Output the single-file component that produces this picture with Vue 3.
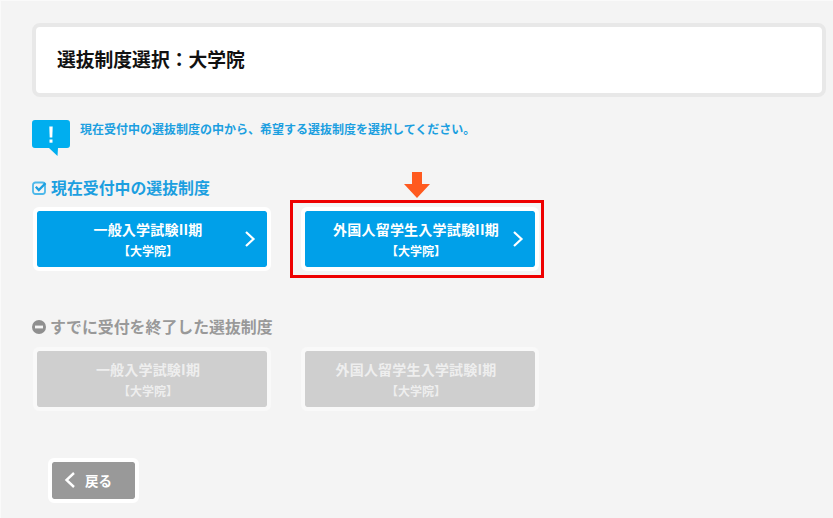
<script setup>
const active = [
  { title: '一般入学試験II期', sub: '【大学院】' },
  { title: '外国人留学生入学試験II期', sub: '【大学院】', marked: true },
]
const closed = [
  { title: '一般入学試験I期', sub: '【大学院】' },
  { title: '外国人留学生入学試験I期', sub: '【大学院】' },
]
</script>

<template>
  <main class="page">
    <header class="title-card"><h1>選抜制度選択：大学院</h1></header>

    <div class="notice">
      <svg class="notice-icon" viewBox="0 0 38 36" width="38" height="36" aria-hidden="true">
        <path d="M3 0H35a3 3 0 0 1 3 3V25a3 3 0 0 1-3 3H26L25.500 36L17 28H3a3 3 0 0 1-3-3V3a3 3 0 0 1 3-3Z" fill="#00aeef" />
        <path d="M17.300 6.500H20.700L20.300 17.500H17.700Z" fill="#fff" />
        <rect x="17.500" y="19.500" width="3" height="3.200" fill="#fff" />
      </svg>
      <p>現在受付中の選抜制度の中から、希望する選抜制度を選択してください。</p>
    </div>

    <h2 class="section-title active-title">
      <svg viewBox="0 0 15 14" width="15" height="14" aria-hidden="true">
        <rect x="1" y="1.500" width="12" height="11.500" rx="2.500" fill="none" stroke="#4db8ea" stroke-width="1.800" />
        <path d="M3.800 5.800L6.800 9L13.500 2.200" fill="none" stroke="#1c9fe0" stroke-width="2.300" />
      </svg>
      現在受付中の選抜制度
    </h2>
    <div class="choices">
      <div v-for="item in active" :key="item.title" class="choice-wrap">
        <template v-if="item.marked">
          <svg class="down-arrow" viewBox="0 0 26 26" width="26" height="26" aria-hidden="true">
            <path d="M8 0H18V12H26L13 26L0 12H8Z" fill="#ff5a1f" />
          </svg>
          <span class="highlight"></span>
        </template>
        <a class="choice">
          <strong>{{ item.title }}</strong>
          <small>{{ item.sub }}</small>
          <svg class="chevron" viewBox="0 0 12 18" width="12" height="18" aria-hidden="true">
            <path d="M2 2L9.500 9L2 16" fill="none" stroke="#fff" stroke-width="2.200" />
          </svg>
        </a>
      </div>
    </div>

    <h2 class="section-title closed-title">
      <svg viewBox="0 0 14 14" width="14" height="14" aria-hidden="true">
        <circle cx="7" cy="7" r="7" fill="#8f8f8f" />
        <rect x="3" y="5.600" width="8" height="2.800" fill="#f4f4f4" />
      </svg>
      すでに受付を終了した選抜制度
    </h2>
    <div class="choices closed-choices">
      <div v-for="item in closed" :key="item.title" class="choice-wrap">
        <a class="choice disabled">
          <strong>{{ item.title }}</strong>
          <small>{{ item.sub }}</small>
        </a>
      </div>
    </div>

    <a class="back">
      <svg viewBox="0 0 12 18" width="12" height="18" aria-hidden="true">
        <path d="M10 2L2.500 9L10 16" fill="none" stroke="#fff" stroke-width="2.400" />
      </svg>
      <span>戻る</span>
    </a>
  </main>
</template>

<style scoped>
.page {
  width: 833px;
  height: 518px;
  box-sizing: border-box;
  padding: 22px 7px 0 31px;
  background: #f4f4f4;
  border-top: 1px solid #fafafa;
  border-left: 1px solid #fafafa;
  overflow: hidden;
  font-family: "Noto Sans CJK JP", sans-serif;
}
.title-card {
  height: 74px;
  box-sizing: border-box;
  display: flex;
  align-items: center;
  padding-left: 21px;
  background: #fff;
  border: 4px solid #e8e8e8;
  border-radius: 8px;
}
h1 {
  margin: -2px 0 0;
  font-size: 18.800px;
  line-height: 1;
  font-weight: 700;
  color: #111;
}
.notice {
  display: flex;
  gap: 10px;
  margin-top: 23px;
}
.notice-icon {
  flex: none;
}
.notice p {
  margin: 0;
  font-size: 12px;
  line-height: 18px;
  font-weight: 700;
  color: #1c9fe0;
}
.section-title {
  display: flex;
  align-items: center;
  gap: 4px;
  margin: 0;
  font-size: 15.900px;
  line-height: 20px;
  font-weight: 700;
}
.active-title {
  margin-top: 22px;
  color: #1c9fe0;
}
.closed-title {
  margin-top: 46px;
  color: #999;
}
.choices {
  display: flex;
  gap: 30px;
  margin: 9px 0 0 1px;
}
.closed-choices {
  margin-top: 10px;
}
.choice-wrap {
  position: relative;
  width: 238px;
}
.down-arrow {
  position: absolute;
  left: 103px;
  top: -35px;
}
.highlight {
  position: absolute;
  left: -11px;
  top: -7px;
  width: 254px;
  height: 78px;
  box-sizing: border-box;
  border: 3px solid #ee0000;
}
.choice {
  position: relative;
  display: flex;
  flex-direction: column;
  align-items: center;
  justify-content: center;
  height: 64px;
  box-sizing: border-box;
  padding: 0 8px 1px 0;
  background: #00a0e9;
  border: 4px solid #fff;
  border-radius: 6px;
  background-clip: padding-box;
  color: #fff;
}
.choice strong {
  font-size: 14px;
  line-height: 20px;
  font-weight: 700;
  letter-spacing: 0.2px;
}
.choice small {
  font-size: 12px;
  line-height: 16px;
  font-weight: 700;
  margin-top: 4px;
}
.chevron {
  position: absolute;
  right: 11px;
  top: 19px;
}
.disabled {
  background-color: #cfcfcf;
  border-color: #f9f9f9;
  color: #eee;
}
.back {
  display: flex;
  align-items: center;
  gap: 9px;
  width: 91px;
  height: 45px;
  box-sizing: border-box;
  margin: 47px 0 0 16px;
  padding: 0 0 2px 12px;
  background: #999;
  background-clip: padding-box;
  border: 4px solid #fff;
  border-radius: 6px;
  color: #fff;
  font-size: 13.500px;
  font-weight: 700;
}
</style>
